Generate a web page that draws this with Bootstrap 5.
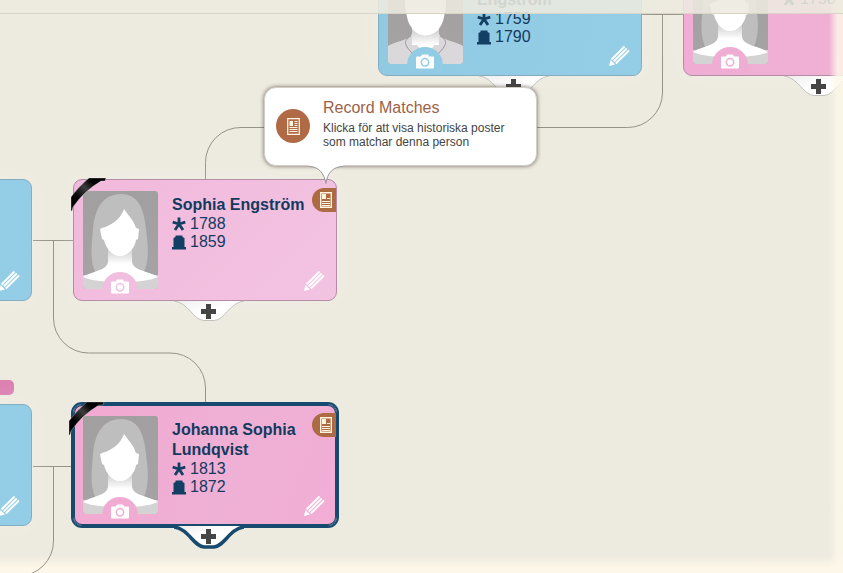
<!DOCTYPE html>
<html lang="sv">
<head>
<meta charset="utf-8">
<meta name="viewport" content="width=device-width, initial-scale=1">
<title>Släktträd</title>
<link href="https://cdn.jsdelivr.net/npm/bootstrap@5.3.0/dist/css/bootstrap.min.css" rel="stylesheet">
<style>
body{font-family:"Liberation Sans",Arial,sans-serif;background:#edeadf;color:#123a5e}
.tree{background:#edeadf}
.links{left:0;top:0;width:100%;height:100%;fill:none;stroke:#96928a;stroke-width:1}
.person{position:absolute;width:264px;height:122px;padding:11px 0 0 9px;border:1px solid #b58ba8;border-radius:9px;background:linear-gradient(135deg,#f1b9db,#f3c3e2);box-shadow:0 0 30px rgba(255,255,255,.25)}
.person.male{background:linear-gradient(100deg,#90c9e2,#93cde6);border-color:#83aec2}
.person.rose{background:linear-gradient(110deg,#f1acd3,#efb0d4 60%,#f5b1d9)}
.person.selected{background:linear-gradient(110deg,#f2a9d2,#efb0d5 60%,#f2add5);border-color:#174a6e;box-shadow:0 0 0 2px #174a6e,inset 0 0 0 1px #174a6e}
.at-a{left:378px;top:-46px}
.at-b{left:683px;top:-46px}
.at-c{left:-232px;top:179px}
.at-d{left:73px;top:179px}
.at-e{left:-232px;top:404px}
.at-f{left:73px;top:404px}
.portrait{width:75px;height:98px}
.portrait>svg{display:block}
.person button{border:0;padding:0;background:none;line-height:0}
.cam{left:19px;bottom:-9px;width:36px;height:26px}
.facts{margin:4px 0 0 14px;width:134px;font-size:16px}
.facts h2{font-size:16px;line-height:20px;font-weight:700;margin:0}
.facts li{line-height:18px;gap:4px}
.record{right:0;top:8px}
.pencil{right:11px;bottom:9px}
.plus{left:100px;top:119px}
.ribbon{left:-3px;top:-3px}
.selected .ribbon{left:-5px;top:-4px}
.tip{left:264px;top:87px;width:273px;min-height:79px;padding:10px 11px;background:#fff;border:1px solid #d2cec6;border-radius:12px;box-shadow:0 0 4px rgba(70,60,50,.75);z-index:5}
.tip .seal{width:34px;height:34px;background:#b06b46;margin-top:11px}
.tip .words{margin-left:13px}
.tip h3{font-size:16px;line-height:20px;color:#9c6248;margin:0}
.tip p{font-size:12px;line-height:14px;color:#444;margin:3px 0 0}
.tail{left:44px;top:76px}
.flag{left:0;top:380px;width:14px;height:15px;background:#dc80b2;border-radius:0 5px 5px 0}
.topveil{height:14px;background:rgba(237,235,223,.88);border-bottom:1px solid #d9d5c6;z-index:8}
.glow-r{width:14px;background:linear-gradient(90deg,rgba(252,247,232,0),rgba(252,247,232,.85) 60%);z-index:7}
.glow-b{height:18px;background:linear-gradient(rgba(252,247,232,0),#fcf7e8 70%)}
</style>
<script src="https://cdn.jsdelivr.net/npm/bootstrap@5.3.0/dist/js/bootstrap.bundle.min.js"></script>
</head>
<body>
<svg width="0" height="0" class="position-absolute" aria-hidden="true">
<defs>
<linearGradient id="neck" x1="0" y1="0" x2="0" y2="1"><stop offset="0" stop-color="#cdcdcd"/><stop offset="1" stop-color="#fff"/></linearGradient>
<linearGradient id="bg" x1="0" y1="0" x2="0" y2="1"><stop offset="0" stop-color="#a19fa0"/><stop offset="1" stop-color="#a5a3a4"/></linearGradient>
<linearGradient id="tab" x1="0" y1="0" x2="1" y2="1"><stop offset="0" stop-color="#eee"/><stop offset=".5" stop-color="#fff"/><stop offset="1" stop-color="#fff"/></linearGradient>
<linearGradient id="band" x1="0" y1="1" x2="1" y2="0"><stop offset="0" stop-color="#000"/><stop offset=".3" stop-color="#050505"/><stop offset=".55" stop-color="#3c3c3c"/><stop offset=".75" stop-color="#000"/></linearGradient>
<clipPath id="frame"><rect width="75" height="98" rx="3"/></clipPath>
</defs>
<symbol id="woman" viewBox="0 0 75 98"><g clip-path="url(#frame)"><path fill="url(#bg)" d="M0 0h75v98H0z"/><path fill="#bebebe" d="M38 3C20 3 12 17 10 38 9 55 6 68 13 83h47c7-15 5-28 3-45C61 17 55 3 38 3z"/><path fill="#d4d3d4" d="M0 84h75v14H0z"/><path fill="#fff" d="M0 86c8-6 25-6 25-16V58h24v12c0 10 18 10 26 16-8 4-22 5-37 5S8 90 0 86z"/><path fill="url(#neck)" d="M25 58q12 14 24 0v15H25z"/><path fill="#fff" d="M41 18C38 27 30 34 19 37l-2 1 2 10 2 1c2 8 8 16 16 16s15-8 16-16l2-1 1-10-3-1C51 30 46 25 41 18z"/></g></symbol>
<symbol id="man" viewBox="0 0 75 98"><g clip-path="url(#frame)"><path fill="url(#bg)" d="M0 0h75v98H0z"/><path fill="#dbd8db" d="M0 80c8-5 20-5 24-12h27c4 7 16 7 24 12v18H0z"/><path fill="#fff" d="M24 60h27v13L38 90 24 73z"/><path fill="url(#neck)" d="M24 63q13 13 27 0v16H24z"/><path fill="none" stroke="#969496" d="M23 70c-8 5-8 8 4 20M52 70c8 5 8 8-4 20"/><path fill="#fff" d="M17 26h41v14l-2 11c-2 11-9 18-18 18s-17-7-19-18l-2-11z"/></g></symbol>
<symbol id="camera" viewBox="0 0 18 15"><path fill="#fff" d="M1 2.500h4L6 .5h6l1 2h4q1 0 1 1V13.500q0 1-1 1H1q-1 0-1-1V3.500q0-1 1-1z"/><circle cx="9" cy="8.300" r="3.700" fill="none" stroke="currentColor" stroke-width="1.500"/></symbol>
<symbol id="star" viewBox="0 0 14 14"><path fill="none" stroke="#123f63" stroke-width="2.800" d="M7 7V.5M7 7L.7 5.200M7 7l6.300-1.800M7 7l-4 6M7 7l4 6"/></symbol>
<symbol id="tomb" viewBox="0 0 14 15"><path fill="#123f63" d="M1.500 12V3l2-1V.5h7V2l2 1v9zM0 12h14v2.500H0z"/></symbol>
<symbol id="edit" viewBox="0 0 21 21"><path fill="#fff" d="M0 21l1.500-6 4.500 4.500z"/><path stroke="#fff" stroke-width="1.900" fill="none" d="M2.500 14.500L15.500 1.500M4.700 16.500L17.700 3.500M6.800 18.500L20 5.500"/></symbol>
<symbol id="doc" viewBox="0 0 13 17"><path fill="none" stroke="#fff4df" stroke-width="1.300" d="M.7.7h11.600v15.600H.7z"/><path fill="#fff4df" d="M2.500 3H6v5H2.500z"/><path stroke="#fff4df" d="M7.500 3.500h3M7.500 5.500h3M7.500 7.500h3M2.500 9.500h8M2.500 11.500h8M2.500 13.500h8"/></symbol>
<symbol id="badge" viewBox="0 0 24 24"><path fill="#ac6b42" d="M12 0h12v24H12A12 12 0 0 1 12 0z"/><path fill="none" stroke="#fff4df" stroke-width="1.400" d="M8.700 4.700h10.600v14.600H8.700z"/><path fill="#fff4df" d="M10 6h4v5h-4z"/><path stroke="#fff4df" d="M15 10.500h3M10 13.500h8M10 15.500h8M10 17.500h8"/></symbol>
<symbol id="add" viewBox="0 0 70 23"><path fill="url(#tab)" stroke="#c3c1be" d="M0 2C15 4 19 21 30 21.500h10C51 21 55 4 70 2"/><path fill="#454545" d="M32 5h5v5h5v5h-5v5h-5v-5h-5v-5h5z"/></symbol>
<symbol id="ribbon" viewBox="0 0 36 35"><path fill="url(#band)" stroke="#fff" stroke-opacity=".6" stroke-width=".5" d="M18 1h17l-1 3h-4Q13 14 2 30l-1 4H0V20Q8 9 18 1z"/></symbol>
</svg>
<main class="tree position-relative vh-100 overflow-hidden">
<div class="glow-b position-absolute bottom-0 start-0 end-0"></div>
<svg class="links position-absolute" aria-hidden="true"><path d="M642 14.500h41M662.500 15v78a35 35 0 0 1-35 34.500H241a35 35 0 0 0-35.500 35V180M33 240.500h40M53.500 240.500V318a35 35 0 0 0 35 35H170a35 35 0 0 1 35.500 35v16M33 466.500h40M53.500 466.500V541a35 35 0 0 1-35 35"/></svg>
<div class="flag position-absolute"></div>

<article class="person male at-a d-flex align-items-start">
<div class="portrait position-relative"><svg width="75" height="98"><use href="#man"/></svg><button class="cam position-absolute" aria-label="Lägg till foto"><svg width="36" height="26"><circle cx="18" cy="18" r="18" fill="#91cbe4"/><use href="#camera" x="9" y="7" width="18" height="15" color="#91cbe4"/></svg></button></div>
<div class="facts"><h2>Anders Engström</h2><ul class="list-unstyled m-0"><li class="d-flex align-items-center"><svg width="14" height="14"><use href="#star"/></svg>1759</li><li class="d-flex align-items-center"><svg width="14" height="15"><use href="#tomb"/></svg>1790</li></ul></div>
<button class="pencil position-absolute" aria-label="Redigera"><svg width="21" height="21"><use href="#edit"/></svg></button><button class="plus position-absolute" aria-label="Lägg till släkting"><svg width="70" height="23"><use href="#add"/></svg></button>
</article>

<article class="person rose at-b d-flex align-items-start">
<div class="portrait position-relative"><svg width="75" height="98"><use href="#woman"/></svg><button class="cam position-absolute" aria-label="Lägg till foto"><svg width="36" height="26"><circle cx="18" cy="18" r="18" fill="#f0add3"/><use href="#camera" x="9" y="7" width="18" height="15" color="#f0add3"/></svg></button></div>
<div class="facts"><h2>Anna</h2><ul class="list-unstyled m-0"><li class="d-flex align-items-center"><svg width="14" height="14"><use href="#star"/></svg>1758</li></ul></div>
<button class="plus position-absolute" aria-label="Lägg till släkting"><svg width="70" height="23"><use href="#add"/></svg></button>
</article>

<article class="person male at-c"><button class="pencil position-absolute" aria-label="Redigera"><svg width="21" height="21"><use href="#edit"/></svg></button></article>

<article class="person at-d d-flex align-items-start">
<div class="portrait position-relative"><svg width="75" height="98"><use href="#woman"/></svg><button class="cam position-absolute" aria-label="Lägg till foto"><svg width="36" height="26"><circle cx="18" cy="18" r="18" fill="#f2bedf"/><use href="#camera" x="9" y="7" width="18" height="15" color="#f2bedf"/></svg></button></div>
<svg class="ribbon position-absolute" width="36" height="35"><use href="#ribbon"/></svg>
<div class="facts"><h2>Sophia Engström</h2><ul class="list-unstyled m-0"><li class="d-flex align-items-center"><svg width="14" height="14"><use href="#star"/></svg>1788</li><li class="d-flex align-items-center"><svg width="14" height="15"><use href="#tomb"/></svg>1859</li></ul></div>
<button class="record position-absolute" aria-label="Record Matches"><svg width="24" height="24"><use href="#badge"/></svg></button><button class="pencil position-absolute" aria-label="Redigera"><svg width="21" height="21"><use href="#edit"/></svg></button><button class="plus position-absolute" aria-label="Lägg till släkting"><svg width="70" height="23"><use href="#add"/></svg></button>
</article>

<article class="person male at-e"><button class="pencil position-absolute" aria-label="Redigera"><svg width="21" height="21"><use href="#edit"/></svg></button></article>

<article class="person selected at-f d-flex align-items-start">
<div class="portrait position-relative"><svg width="75" height="98"><use href="#woman"/></svg><button class="cam position-absolute" aria-label="Lägg till foto"><svg width="36" height="26"><circle cx="18" cy="18" r="18" fill="#f1abd3"/><use href="#camera" x="9" y="7" width="18" height="15" color="#f1abd3"/></svg></button></div>
<svg class="ribbon position-absolute" width="36" height="35"><use href="#ribbon"/></svg>
<div class="facts"><h2>Johanna Sophia Lundqvist</h2><ul class="list-unstyled m-0"><li class="d-flex align-items-center"><svg width="14" height="14"><use href="#star"/></svg>1813</li><li class="d-flex align-items-center"><svg width="14" height="15"><use href="#tomb"/></svg>1872</li></ul></div>
<button class="record position-absolute" aria-label="Record Matches"><svg width="24" height="24"><use href="#badge"/></svg></button><button class="pencil position-absolute" aria-label="Redigera"><svg width="21" height="21"><use href="#edit"/></svg></button>
<button class="plus position-absolute" aria-label="Lägg till släkting"><svg width="70" height="27"><path fill="url(#tab)" d="M3 2h64C55 6 51 22 40 23H30C19 22 15 6 3 2z"/><path fill="none" stroke="#174a6e" stroke-width="3.500" d="M0 3C15 5 19 22 30 23h10C51 22 55 5 70 3"/><path fill="#454545" d="M32 5h5v5h5v5h-5v5h-5v-5h-5v-5h5z"/></svg></button>
</article>

<aside class="tip position-absolute d-flex align-items-start" role="tooltip">
<span class="seal rounded-circle d-flex align-items-center justify-content-center flex-shrink-0"><svg width="13" height="17"><use href="#doc"/></svg></span>
<div class="words"><h3>Record Matches</h3><p>Klicka för att visa historiska poster som matchar denna person</p></div>
<svg class="tail position-absolute" width="34" height="24"><path fill="#fff" d="M0 0h34v2C24 3 18 9 17 20 16 9 10 3 0 2z"/><path fill="none" stroke="#999" d="M0 2.500c10 0 15 7 17 17 1-10 7-17 17-17"/></svg>
</aside>
<div class="topveil position-absolute top-0 start-0 end-0"></div>
<div class="glow-r position-absolute top-0 bottom-0 end-0"></div>
</main>
</body>
</html>
